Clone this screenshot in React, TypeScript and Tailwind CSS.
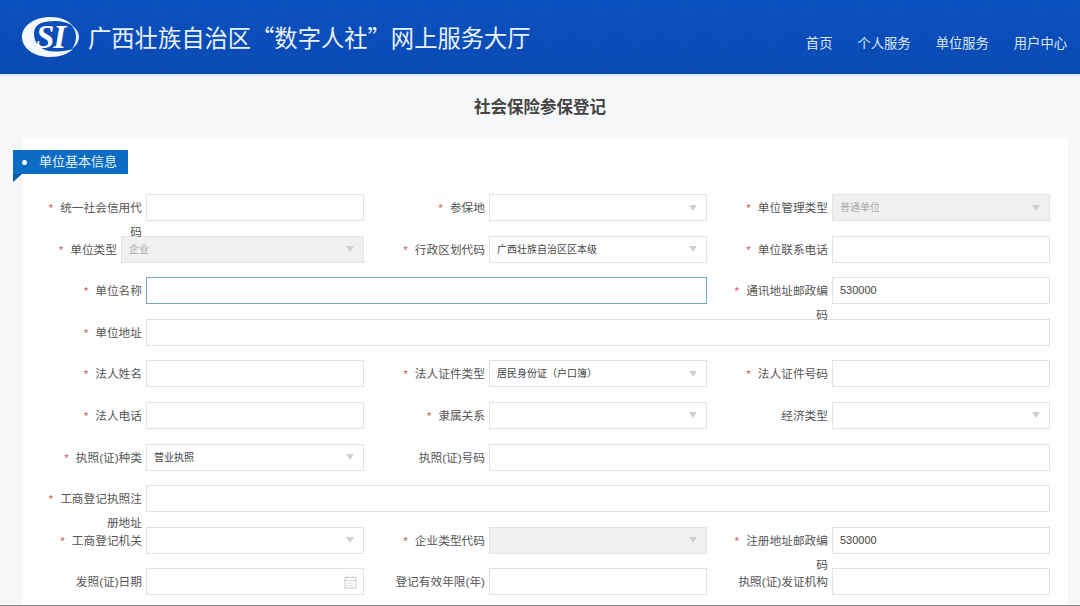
import React from 'react';

const CJK = 'font-["Liberation_Sans","Noto_Sans_CJK_SC",sans-serif]';

interface FieldProps {
  label: string;
  required?: boolean;
  value?: string;
  kind?: 'input' | 'select' | 'date';
  disabled?: boolean;
  focused?: boolean;
  span?: string;
  labelWidth?: string;
}

const Arrow: React.FC = () => (
  <span className="ml-auto mr-[9px] h-0 w-0 border-x-[4px] border-t-[6px] border-x-transparent border-t-[#cdd1d5]" />
);

const DateIcon: React.FC = () => (
  <svg className="ml-auto mr-[6px]" width="13" height="14" viewBox="0 0 13 14" fill="none" stroke="#d0d2d2" strokeWidth="1.2">
    <rect x="1" y="2.5" width="11" height="10.5" />
    <path d="M1 5.5h11M3.5 0.5v3M9.5 0.5v3M3 8h2M6 8h2M9 8h1M3 10.5h2M6 10.5h2M9 10.5h1" />
  </svg>
);

const Field: React.FC<FieldProps> = ({
  label,
  required,
  value,
  kind = 'input',
  disabled,
  focused,
  span = '',
  labelWidth = 'w-[120px]',
}) => {
  const isNumber = value === '530000';
  return (
    <div className={`flex h-[27px] gap-[4px] ${span}`}>
      <div className={`flex shrink-0 justify-end ${labelWidth}`}>
        <label className="relative z-10 block h-[27px] w-[100px] shrink-0 pt-[2px] text-right text-[11.7px] leading-[24px] text-[#555]">
          {required && <span className="mr-[7px] text-[#c9575f]">*</span>}
          {label}
        </label>
      </div>
      <div
        className={`flex min-w-0 flex-1 items-center border pl-[7px] ${
          focused ? 'border-[#6fa9bb]' : 'border-[#e3e3e3]'
        } ${disabled ? 'bg-[#f0f0f0] text-[#a9a9a9]' : 'bg-white text-[#444]'} ${
          isNumber ? 'text-[11px]' : 'text-[10px]'
        }`}
      >
        <span>{value}</span>
        {kind === 'select' && <Arrow />}
        {kind === 'date' && <DateIcon />}
      </div>
    </div>
  );
};

const Logo: React.FC = () => (
  <svg width="60" height="42" viewBox="0 0 60 42" className="shrink-0">
    <path
      fill="#f3f8fd"
      d="M29 1C13 1 1 10 1 21s12 20 28 20c10 0 18-3 23-8-6 2-12 2.500-19 2.500C21 35.500 13 28 13 18S21 5 34 5c7 0 13 1.500 18 5C47 4 39 1 29 1z"
    />
    <path d="M50 9c5.500 3.500 8 7.500 8 12s-2.500 8.500-7 12c2.500-4 4-8 4-12S54 13 50 9z" fill="#e6effa" />
    <text
      x="15"
      y="32"
      fill="#ffffff"
      fontFamily="'Liberation Serif', serif"
      fontStyle="italic"
      fontWeight="700"
      fontSize="33"
      letterSpacing="-1"
    >
      SI
    </text>
  </svg>
);

const HeaderPattern: React.FC = () => (
  <svg className="absolute inset-0 h-full w-full opacity-[0.025]" aria-hidden="true">
    <defs>
      <pattern id="lattice" width="44" height="44" patternUnits="userSpaceOnUse">
        <path
          d="M0 22h10v-12h24v24H10M22 0v10M22 34v10M34 22h10M16 16h12v12H16z"
          fill="none"
          stroke="#bcd6ff"
          strokeWidth="1.5"
        />
      </pattern>
    </defs>
    <rect width="100%" height="100%" fill="url(#lattice)" />
  </svg>
);

const App: React.FC = () => {
  return (
    <div className={`flex h-[606px] w-[1080px] flex-col overflow-hidden border-b border-[#8a8a8a] bg-[#f6f7f8] ${CJK}`}>
      <header className="relative h-[76px] shrink-0 border-b-2 border-[#dce9f8] bg-gradient-to-b from-[#0a50bf] to-[#0a4ab3]">
        <HeaderPattern />
        <div className="relative flex h-full items-center pl-[21px] pr-[13px]">
          <Logo />
          <h1 className='ml-[7px] mt-[2px] whitespace-nowrap font-["Noto_Sans_CJK_SC",sans-serif] text-[23.3px] font-normal leading-none text-[#e9f1fb]'>
            广西壮族自治区“数字人社”网上服务大厅
          </h1>
          <nav className="ml-auto mt-[13px] flex gap-[25px] text-[13.3px] text-[#dbe7f6]">
            <a>首页</a>
            <a>个人服务</a>
            <a>单位服务</a>
            <a>用户中心</a>
          </nav>
        </div>
      </header>

      <h2 className="mt-[19px] h-[24px] shrink-0 text-center text-[16.5px] font-bold leading-[24px] text-[#444]">
        社会保险参保登记
      </h2>

      <main className="ml-[22px] mt-[19px] w-[1046px] flex-1 bg-white pt-[12px]">
        <div className="relative -ml-[9px] flex h-[24px] w-[115px] items-center bg-[#0b6cc4] pl-[9px] text-[13px] text-[#e8f2fb]">
          <span className="mr-[12px] h-[5px] w-[5px] rounded-full bg-white" />
          单位基本信息
          <span className="absolute left-0 top-full h-0 w-0 border-b-[8px] border-l-[9px] border-b-transparent border-l-[#0a5aa5]" />
        </div>

        <div className="mt-[20px] grid w-[1028px] grid-cols-[342px_343px_343px] gap-y-[14.6px]">
          <Field required label="统一社会信用代码" />
          <Field required label="参保地" kind="select" labelWidth="w-[121px]" />
          <Field required label="单位管理类型" kind="select" value="普通单位" disabled labelWidth="w-[121px]" />

          <Field required label="单位类型" kind="select" value="企业" disabled labelWidth="w-[95px]" />
          <Field required label="行政区划代码" kind="select" value="广西壮族自治区区本级" labelWidth="w-[121px]" />
          <Field required label="单位联系电话" labelWidth="w-[121px]" />

          <Field required label="单位名称" focused span="col-span-2" />
          <Field required label="通讯地址邮政编码" value="530000" labelWidth="w-[121px]" />

          <Field required label="单位地址" span="col-span-3" />

          <Field required label="法人姓名" />
          <Field required label="法人证件类型" kind="select" value="居民身份证（户口簿）" labelWidth="w-[121px]" />
          <Field required label="法人证件号码" labelWidth="w-[121px]" />

          <Field required label="法人电话" />
          <Field required label="隶属关系" kind="select" labelWidth="w-[121px]" />
          <Field label="经济类型" kind="select" labelWidth="w-[121px]" />

          <Field required label="执照(证)种类" kind="select" value="营业执照" />
          <Field label="执照(证)号码" span="col-span-2" labelWidth="w-[121px]" />

          <Field required label="工商登记执照注册地址" span="col-span-3" />

          <Field required label="工商登记机关" kind="select" />
          <Field required label="企业类型代码" kind="select" disabled labelWidth="w-[121px]" />
          <Field required label="注册地址邮政编码" value="530000" labelWidth="w-[121px]" />

          <Field label="发照(证)日期" kind="date" />
          <Field label="登记有效年限(年)" labelWidth="w-[121px]" />
          <Field label="执照(证)发证机构" labelWidth="w-[121px]" />
        </div>
      </main>
    </div>
  );
};

export default App;
